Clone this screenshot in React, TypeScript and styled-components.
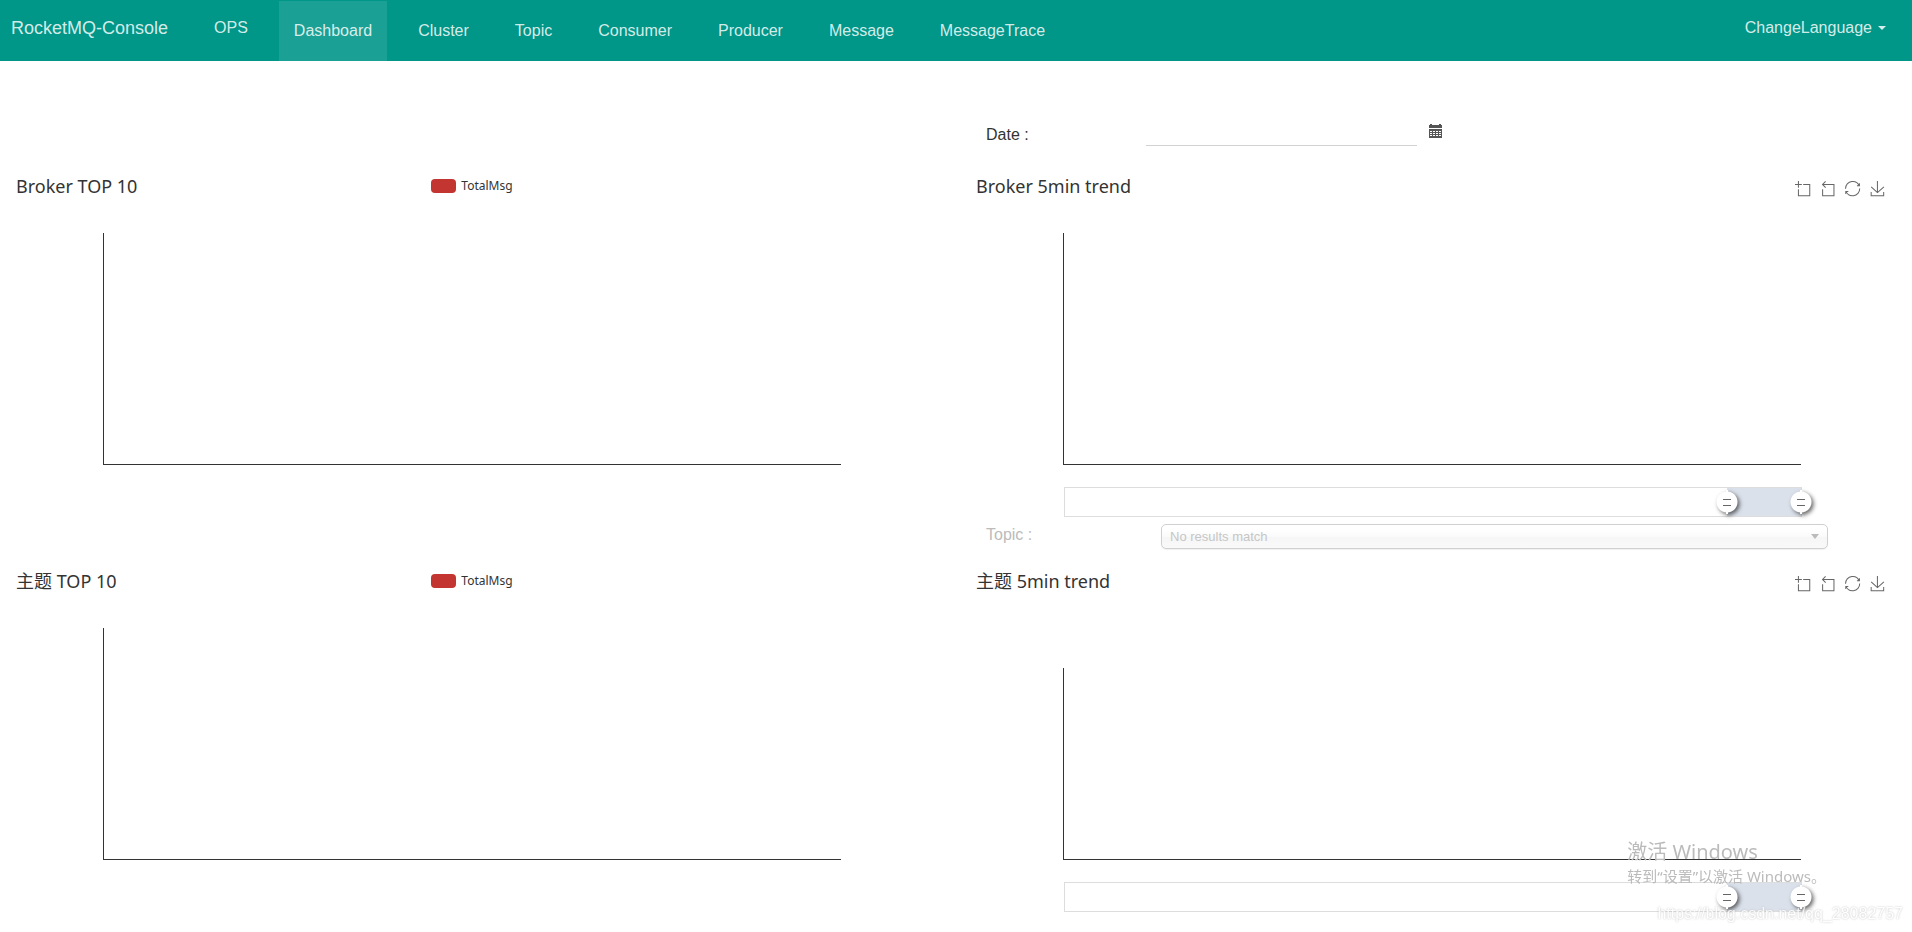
import React from "react";
import styled, { createGlobalStyle, css } from "styled-components";

const GlobalStyle = createGlobalStyle`
  * { box-sizing: border-box; }
  body {
    margin: 0;
    background: #fff;
    color: #333;
    font: 16px/20px "Liberation Sans", Arial, "Noto Sans CJK SC", sans-serif;
  }
`;

const chartFont = `"Noto Sans", "Noto Sans CJK SC", sans-serif`;

const NavBar = styled.header`
  display: flex;
  align-items: flex-start;
  justify-content: space-between;
  height: 61px;
  padding: 1px 11px 0;
  background: #009688;
`;

const NavGroup = styled.nav`
  display: flex;
  align-items: flex-start;
`;

const Brand = styled.a`
  margin-right: 31px;
  padding: 17px 0;
  color: rgba(255, 255, 255, 0.84);
  font-size: 18px;
  text-decoration: none;
  white-space: nowrap;
`;

const navItem = css`
  padding: 17px 15px;
  color: rgba(255, 255, 255, 0.84);
  text-decoration: none;
  white-space: nowrap;
`;

const NavLink = styled.a`
  ${navItem}
  margin-right: 16px;
`;

const NavTab = styled.a<{ $active?: boolean }>`
  ${navItem}
  height: 60px;
  margin-right: 16px;
  padding-top: 20px;
  background: ${(p) => (p.$active ? "rgba(255, 255, 255, 0.1)" : "transparent")};
`;

const LanguageButton = styled.button`
  ${navItem}
  display: flex;
  align-items: center;
  gap: 6px;
  border: 0;
  background: none;
  font: inherit;
  cursor: pointer;
`;

const Caret = styled.span`
  border: 4px solid transparent;
  border-top-color: currentColor;
  border-bottom: 0;
`;

const Board = styled.main`
  display: grid;
  grid-template-columns: 1fr 1fr;
  column-gap: 38px;
  padding: 0 19px 0 11px;
`;

const FieldRow = styled.form`
  grid-column: 2;
  display: grid;
  grid-template-columns: 160px minmax(0, 1fr);
  padding-left: 15px;
`;

const DateRow = styled(FieldRow)`
  height: 112px;
  padding-top: 53px;
`;

const TopicRow = styled(FieldRow)`
  grid-template-columns: 175px minmax(0, 1fr);
  height: 44px;
  padding-right: 65px;
`;

const FieldLabel = styled.label<{ $muted?: boolean }>`
  color: ${(p) => (p.$muted ? "#bbb" : "#333")};
  line-height: ${(p) => (p.$muted ? "22px" : "42px")};
`;

const DateGroup = styled.div`
  display: flex;
  align-items: flex-start;
`;

const DateInput = styled.input`
  width: 271px;
  height: 32px;
  padding: 0;
  border: 0;
  border-bottom: 1px solid #d2d2d2;
  background: none;
  font: inherit;
  outline: 0;
`;

const IconButton = styled.button`
  display: block;
  padding: 0;
  border: 0;
  background: none;
  color: #555;
  line-height: 0;
  cursor: pointer;
`;

const CalendarButton = styled(IconButton)`
  margin: 10px 12px;
`;

const SelectBox = styled.div`
  position: relative;
  height: 25px;
`;

const TopicSelect = styled.select`
  display: block;
  width: 100%;
  height: 25px;
  padding: 0 8px;
  appearance: none;
  border: 1px solid #d0d0d0;
  border-radius: 5px;
  background: linear-gradient(#fff 20%, #fafafa 50%, #f6f6f6 52%, #f9f9f9 100%);
  box-shadow: 0 1px 1px rgba(0, 0, 0, 0.06);
  color: #c6c6c6;
  font: 13px/23px "Liberation Sans", Arial, sans-serif;
  opacity: 1;
`;

const SelectArrow = styled.span`
  position: absolute;
  top: 10px;
  right: 9px;
  border: 4px solid transparent;
  border-top: 5px solid #bbb;
  border-bottom: 0;
  pointer-events: none;
`;

const Panel = styled.section`
  min-width: 0;
  padding-bottom: 7px;
`;

const PanelHead = styled.div<{ $tall?: boolean }>`
  display: grid;
  grid-template-columns: 1fr auto 1fr;
  align-items: start;
  height: ${(p) => (p.$tall ? 100 : 60)}px;
  padding: 0 5px;
  font-family: ${chartFont};
`;

const Title = styled.h2`
  margin: 0;
  font-size: 18px;
  font-weight: 400;
  line-height: 26px;
  white-space: nowrap;
`;

const Legend = styled.div`
  display: flex;
  align-items: center;
  gap: 5px;
  height: 26px;
  font-size: 12px;
  line-height: 14px;
`;

const Swatch = styled.span`
  width: 25px;
  height: 14px;
  border-radius: 4px;
  background: #c23531;
`;

const Toolbox = styled.div`
  grid-column: 3;
  justify-self: end;
  display: flex;
  gap: 10px;
  padding: 8px 3px;
`;

const Plot = styled.div<{ $short?: boolean }>`
  height: ${(p) => (p.$short ? 192 : 232)}px;
  margin: 0 10%;
  border-left: 1px solid #333;
  border-bottom: 1px solid #333;
`;

const Zoom = styled.div`
  position: relative;
  height: 30px;
  margin: 22px calc(10% - 1px) 0 calc(10% + 1px);
  border: 1px solid #ddd;
`;

const Selection = styled.div`
  height: 100%;
  margin-left: 90%;
  background: #dbe1eb;
`;

const thumb = css`
  width: 22px;
  height: 28px;
  appearance: none;
  border: 0;
  border-radius: 0;
  pointer-events: auto;
  background:
    linear-gradient(#666, #666) 50% 11px / 8px 1px no-repeat,
    linear-gradient(#666, #666) 50% 17px / 8px 1px no-repeat,
    radial-gradient(circle at 50% 50%, #fff 10px, transparent 11px),
    linear-gradient(#fff, #fff) 50% 50% / 2px 24px no-repeat;
  filter: drop-shadow(2px 2px 2px rgba(0, 0, 0, 0.6));
`;

const ZoomHandle = styled.input`
  position: absolute;
  top: 0;
  left: -11px;
  width: calc(100% + 22px);
  height: 28px;
  margin: 0;
  appearance: none;
  background: none;
  pointer-events: none;
  &::-webkit-slider-thumb { ${thumb} }
  &::-moz-range-thumb { ${thumb} }
`;

const ActivationNotice = styled.aside`
  position: fixed;
  right: 86px;
  bottom: 45px;
  color: #bbb;
  font-family: ${chartFont};
  font-size: 15px;
  line-height: 22px;
  pointer-events: none;
  p { margin: 0; }
  p:first-child { font-size: 20px; line-height: 26px; }
`;

const SourceMark = styled.aside`
  position: fixed;
  right: 9px;
  bottom: 8px;
  color: #fff;
  text-shadow: 0 0 2px #aaa;
  opacity: 0.8;
  pointer-events: none;
`;

const CalendarIcon = () => (
  <svg width="13" height="14" viewBox="0 0 13 14" fill="currentColor" aria-hidden="true">
    <path d="M0 4V1h1V0h2v1h7V0h2v1h1v3z" />
    <path
      fillRule="evenodd"
      d="M0 5h13v9H0zM1 7v1h2V7zM4 7v1h2V7zM7 7v1h2V7zM10 7v1h2V7zM1 9v1h2V9zM4 9v1h2V9zM7 9v1h2V9zM10 9v1h2V9zM1 11v1h2v-1zM4 11v1h2v-1zM7 11v1h2v-1zM10 11v1h2v-1z"
    />
  </svg>
);

const tools = [
  { label: "Zoom", d: "M0,13.5h26.9 M13.5,26.9V0 M32.1,13.5H58V58H13.5 V32.1" },
  { label: "Zoom reset", d: "M22,1.4L9.9,13.5l12.3,12.3 M10.3,13.5H54.9v44.6 H10.3v-26" },
  {
    label: "Restore",
    d: "M47,18.9h9.8V8.7 M56.3,20.1 C52.1,9,40.5,0.6,26.8,2.1C12.6,3.7,1.6,16.2,2.1,30.6 M13,41.1H3.1v10.2 M3.7,39.9c4.2,11.1,15.8,19.5,29.5,18 c14.2-1.6,25.2-14.1,24.7-28.5",
  },
  {
    label: "Save as image",
    d: "M4.7,22.9L29.3,45.5L54.7,23.4M4.6,43.6L4.6,58L53.8,58L53.8,43.6M29.2,45.1L29.2,0",
  },
];

const ToolButtons = () => (
  <Toolbox>
    {tools.map((t) => (
      <IconButton key={t.label} type="button" aria-label={t.label}>
        <svg
          width="15"
          height="15"
          viewBox="0 0 59 59"
          fill="none"
          stroke="#666"
          strokeWidth="4"
          overflow="visible"
        >
          <path d={t.d} />
        </svg>
      </IconButton>
    ))}
  </Toolbox>
);

const TopPanel = ({ title }: { title: string }) => (
  <Panel>
    <PanelHead>
      <Title>{title}</Title>
      <Legend>
        <Swatch />
        TotalMsg
      </Legend>
    </PanelHead>
    <Plot />
  </Panel>
);

const TrendPanel = ({ title, tall }: { title: string; tall?: boolean }) => (
  <Panel>
    <PanelHead $tall={tall}>
      <Title>{title}</Title>
      <ToolButtons />
    </PanelHead>
    <Plot $short={tall} />
    <Zoom>
      <Selection />
      <ZoomHandle type="range" defaultValue={90} aria-label={`${title} range start`} />
      <ZoomHandle type="range" defaultValue={100} aria-label={`${title} range end`} />
    </Zoom>
  </Panel>
);

const tabs = ["Dashboard", "Cluster", "Topic", "Consumer", "Producer", "Message", "MessageTrace"];

export default function App() {
  return (
    <>
      <GlobalStyle />
      <NavBar>
        <NavGroup>
          <Brand href="#">RocketMQ-Console</Brand>
          <NavLink href="#ops">OPS</NavLink>
          {tabs.map((tab, i) => (
            <NavTab key={tab} href={`#${tab}`} $active={i === 0}>
              {tab}
            </NavTab>
          ))}
        </NavGroup>
        <LanguageButton type="button">
          ChangeLanguage
          <Caret />
        </LanguageButton>
      </NavBar>
      <Board>
        <DateRow>
          <FieldLabel htmlFor="date">Date :</FieldLabel>
          <DateGroup>
            <DateInput id="date" type="text" />
            <CalendarButton type="button" aria-label="Pick a date">
              <CalendarIcon />
            </CalendarButton>
          </DateGroup>
        </DateRow>
        <TopPanel title="Broker TOP 10" />
        <TrendPanel title="Broker 5min trend" />
        <TopicRow>
          <FieldLabel htmlFor="topic" $muted>
            Topic :
          </FieldLabel>
          <SelectBox>
            <TopicSelect id="topic" disabled>
              <option>No results match</option>
            </TopicSelect>
            <SelectArrow />
          </SelectBox>
        </TopicRow>
        <TopPanel title="主题 TOP 10" />
        <TrendPanel title="主题 5min trend" tall />
      </Board>
      <ActivationNotice>
        <p>激活 Windows</p>
        <p>转到“设置”以激活 Windows。</p>
      </ActivationNotice>
      <SourceMark>https://blog.csdn.net/qq_28082757</SourceMark>
    </>
  );
}
